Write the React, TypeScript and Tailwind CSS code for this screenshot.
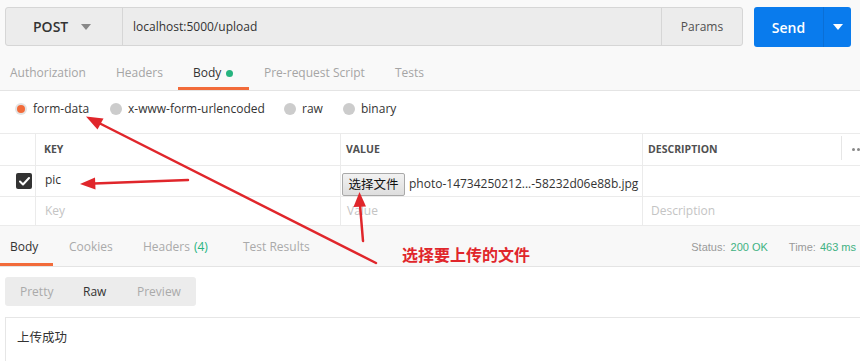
import React from "react";

const Caret = ({ color }: { color: string }) => (
  <svg width="10" height="6" viewBox="0 0 10 6">
    <path d="M0 0 L10 0 L5 6 Z" fill={color} />
  </svg>
);

export default function App() {
  return (
    <div className="relative w-[860px] h-[361px] overflow-hidden bg-white font-['Open_Sans',sans-serif] text-[12px] text-[#505050]">
      {/* Top area */}
      <div className="bg-[#f9f9f9] border-b border-[#e4e4e4] pt-[7px]">
        <div className="flex pl-[5px]">
          <div className="flex w-[738px] h-[39px] rounded-[3px] border border-[#d6d6d6] bg-[#ececec]">
            <div className="w-[117px] flex items-center pl-[27px] border-r border-[#d6d6d6]">
              <span className="text-[14px] font-semibold text-[#333]">POST</span>
              <span className="ml-[13px] mt-[1px]"><Caret color="#888" /></span>
            </div>
            <div className="flex-1 flex items-center pl-[10px] text-[12px] text-[#333]">localhost:5000/upload</div>
            <div className="w-[81px] flex items-center justify-center border-l border-[#d6d6d6] text-[#505050]">Params</div>
          </div>
          <div className="ml-[11px] flex w-[97px] h-[40px] rounded-[3px] bg-[#097bed]">
            <div className="w-[69px] flex items-center justify-center text-[14px] font-semibold text-white">Send</div>
            <div className="w-px bg-[#0a6fd6]" />
            <div className="flex-1 flex items-center justify-center"><Caret color="#ffffff" /></div>
          </div>
        </div>
        <div className="mt-[14px] h-[29px] flex text-[12px] text-[#a5a5a5]">
          <div className="w-[101px] pl-[10px] flex items-center pb-[2px] border-b-[3px] border-transparent">Authorization</div>
          <div className="w-[77px] pl-[15px] flex items-center pb-[2px] border-b-[3px] border-transparent">Headers</div>
          <div className="w-[71px] pl-[15px] flex items-center pb-[2px] border-b-[3px] border-[#f26b3a] text-[#333]">
            Body<span className="ml-[5px] w-[7px] h-[7px] rounded-full bg-[#26b47f]" />
          </div>
          <div className="w-[131px] pl-[15px] flex items-center pb-[2px] border-b-[3px] border-transparent">Pre-request Script</div>
          <div className="pl-[15px] flex items-center pb-[2px] border-b-[3px] border-transparent">Tests</div>
        </div>
      </div>

      {/* Body types */}
      <div className="h-[43px] flex items-start pt-[9px] pl-[15px] text-[12px] text-[#333]">
        <div className="w-[95px] flex items-center">
          <span className="w-[12px] h-[12px] rounded-full bg-[#e3e3e3] flex items-center justify-center">
            <span className="w-[8px] h-[8px] rounded-full bg-[#f26b3a]" />
          </span>
          <span className="ml-[6px]">form-data</span>
        </div>
        <div className="w-[174px] flex items-center">
          <span className="w-[12px] h-[12px] rounded-full bg-[#cccccc]" />
          <span className="ml-[6px]">x-www-form-urlencoded</span>
        </div>
        <div className="w-[59px] flex items-center">
          <span className="w-[12px] h-[12px] rounded-full bg-[#cccccc]" />
          <span className="ml-[6px]">raw</span>
        </div>
        <div className="flex items-center">
          <span className="w-[12px] h-[12px] rounded-full bg-[#cccccc]" />
          <span className="ml-[6px]">binary</span>
        </div>
      </div>

      {/* Table */}
      <div className="border-t border-[#ebebeb] -mt-px">
        <div className="grid grid-cols-[36px_305px_302px_199px_18px] h-[32px] border-b border-[#ebebeb] text-[10.5px] font-bold text-[#505050]">
          <div className="border-r border-[#ebebeb]" />
          <div className="border-r border-[#ebebeb] flex items-center pl-[8px]">KEY</div>
          <div className="border-r border-[#ebebeb] flex items-center pl-[5px]">VALUE</div>
          <div className="flex items-center pl-[5px] relative">
            DESCRIPTION
            <span className="absolute right-0 top-[2px] w-px h-[24px] bg-[#e6e6e6]" />
          </div>
          <div className="flex items-center pl-[10px] gap-[2px]">
            <span className="w-[3px] h-[3px] rounded-full bg-[#888]" />
            <span className="w-[3px] h-[3px] rounded-full bg-[#888]" />
          </div>
        </div>
        <div className="grid grid-cols-[36px_305px_302px_199px_18px] h-[31px] border-b border-[#ebebeb] text-[12px] text-[#333]">
          <div className="border-r border-[#ebebeb] flex items-center justify-end pr-[3px]">
            <span className="w-[16px] h-[16px] rounded-[2px] bg-[#333] flex items-center justify-center">
              <svg width="11" height="9" viewBox="0 0 11 9">
                <path d="M1 4.5 L4 7.5 L10 1" stroke="#fff" strokeWidth="2" fill="none" strokeLinecap="round" strokeLinejoin="round" />
              </svg>
            </span>
          </div>
          <div className="border-r border-[#ebebeb] flex items-center pl-[9px] pb-[2px]">pic</div>
          <div className="border-r border-[#ebebeb] flex items-center pl-[1px] pt-[6px]">
            <span className="h-[23px] w-[63px] flex items-center justify-center border border-[#a9a9a9] rounded-[2px] bg-[linear-gradient(#f2f2f2,#dedede)] text-[12.5px] text-[#111] font-['Noto_Sans_CJK_SC',sans-serif]">选择文件</span>
            <span className="ml-[4px] whitespace-nowrap">photo-14734250212...-58232d06e88b.jpg</span>
          </div>
          <div />
          <div />
        </div>
        <div className="grid grid-cols-[36px_305px_302px_199px_18px] h-[29px] border-b border-[#ebebeb] text-[12px] text-[#c4c4c4]">
          <div className="border-r border-[#ebebeb]" />
          <div className="border-r border-[#ebebeb] flex items-center pl-[9px]">Key</div>
          <div className="border-r border-[#ebebeb] flex items-center pl-[6px]">Value</div>
          <div className="flex items-center pl-[8px]">Description</div>
          <div />
        </div>
      </div>

      {/* Response tabs */}
      <div className="h-[41px] bg-[#f8f8f8] border-b border-[#e4e4e4] flex items-stretch">
        <div className="w-[53px] pl-[10px] pt-[4px] flex items-center border-b-[3px] border-[#f26b3a] text-[#333] text-[12px]">Body</div>
        <div className="w-[80px] pl-[16px] pt-[4px] flex items-center border-b-[3px] border-transparent text-[#aaa]">Cookies</div>
        <div className="w-[100px] pl-[10px] pt-[4px] flex items-center border-b-[3px] border-transparent text-[#aaa]">
          Headers<span className="ml-[4px] text-[#26b47f]">(4)</span>
        </div>
        <div className="pl-[10px] pt-[4px] flex items-center border-b-[3px] border-transparent text-[#aaa]">Test Results</div>
        <div className="ml-auto pr-[4px] flex items-start pt-[13px] font-['Liberation_Sans',Arial,sans-serif] text-[11px]">
          <span className="text-[#9a9a9a]">Status:</span>
          <span className="ml-[5px] text-[#3fb283]">200 OK</span>
          <span className="ml-[21px] text-[#9a9a9a]">Time:</span>
          <span className="ml-[4px] text-[#3fb283]">463 ms</span>
        </div>
      </div>

      {/* Response body */}
      <div className="pt-[10px] pl-[5px]">
        <div className="w-[191px] h-[29px] rounded-[3px] bg-[#ececec] flex text-[12px]">
          <div className="w-[63px] pl-[15px] flex items-center text-[#aaa]">Pretty</div>
          <div className="w-[54px] pl-[15px] flex items-center text-[#333]">Raw</div>
          <div className="pl-[15px] flex items-center text-[#aaa]">Preview</div>
        </div>
        <div className="mt-[11px] border-t border-l border-[#e6e6e6] h-[60px] pl-[11px] pt-[10px] text-[12.5px] text-[#333] font-['Noto_Sans_CJK_SC',sans-serif]">
          上传成功
        </div>
      </div>

      {/* Annotations */}
      <svg className="absolute inset-0 pointer-events-none" width="860" height="361" viewBox="0 0 860 361">
        <g stroke="#e0262b" strokeWidth="2.5" strokeLinecap="round">
          <line x1="376" y1="263" x2="97" y2="122" />
          <line x1="188" y1="180" x2="94" y2="183.5" />
          <line x1="363" y1="241" x2="360" y2="205" />
        </g>
        <g fill="#e0262b">
          <polygon points="86,116.5 103.5,118.5 97.5,129.5" />
          <polygon points="80,184 95,177.5 95.5,189.5" />
          <polygon points="359.5,192 353.5,207 366,206.5" />
        </g>
      </svg>
      <div className="absolute left-[402px] top-[243px] text-[16px] leading-[22px] font-bold text-[#e0262b] font-['Noto_Sans_CJK_SC',sans-serif]">
        选择要上传的文件
      </div>
    </div>
  );
}
